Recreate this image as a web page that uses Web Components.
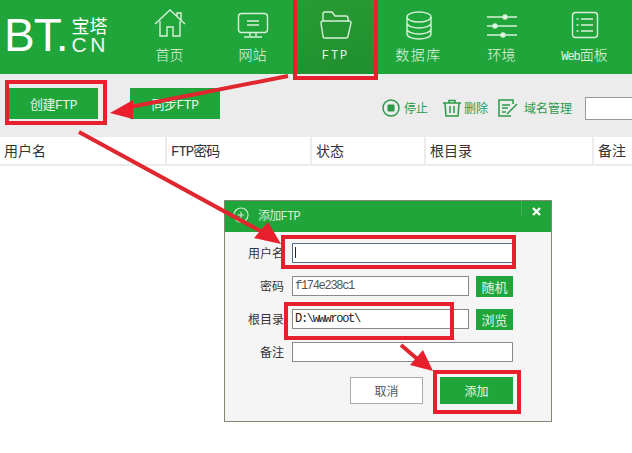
<!DOCTYPE html>
<html lang="zh">
<head>
<meta charset="utf-8">
<title>FTP</title>
<style>
    html, body {
        margin: 0;
        height: 100%;
        background: #fff;
        overflow: hidden;
    }

    body {
        position: relative;
        font-family: "Liberation Mono", "Noto Sans CJK SC", monospace;
        color: #333;
    }
</style>
</head>
<body>
<bt-header>
    <nav-item label="首页"><svg viewBox="0 0 32 30"><path d="M1 14 16 0l15 14M6 11v15h7v-9h6v9h7V11M23 6V3h4v7"/></svg></nav-item>
    <nav-item label="网站"><svg viewBox="0 0 32 30"><rect x="1.500" y="3.500" width="29" height="19" rx="3"/><path d="M10 11h12M10 15h12M13 23v3M19 23v3M7 27h18"/></svg></nav-item>
    <nav-item label="FTP" active spaced><svg viewBox="0 0 32 30"><path d="M3 11V4q0-2 2-2h7l3 4h11q2 0 2 2v3M1 13q0-2 2-2h26q2 0 2 2l-3 13q0 2-2 2H5q-2 0-2-2z"/></svg></nav-item>
    <nav-item label="数据库" wide><svg viewBox="0 0 32 30"><ellipse cx="16" cy="7" rx="12" ry="5"/><path d="M4 7v17c0 3 6 5 12 5s12-2 12-5V7M4 13c0 3 6 5 12 5s12-2 12-5M4 19c0 3 6 5 12 5s12-2 12-5"/></svg></nav-item>
    <nav-item label="环境"><svg viewBox="0 0 32 30"><path d="M1 7h30M1 16h30M1 25h30"/><circle class="dot" cx="19" cy="7" r="2" fill="#e8f6ea"/><circle class="dot" cx="9" cy="16" r="2" fill="#e8f6ea"/><circle class="dot" cx="17" cy="25" r="2" fill="#e8f6ea"/></svg></nav-item>
    <nav-item latin="Web" label="面板"><svg viewBox="0 0 32 30"><rect x="3.500" y="2.500" width="25" height="25" rx="3"/><path d="M12 9h12M12 15h12M12 21h12M7.500 9h2M7.500 15h2M7.500 21h2"/></svg></nav-item>
</bt-header>
<bt-toolbar></bt-toolbar>
<bt-table></bt-table>
<add-dialog></add-dialog>
<mark-up></mark-up>

<script>
class BtHeader extends HTMLElement {
    constructor() {
        super();
        this.shadowDOM = this.attachShadow({ mode: 'open' });
    }

    connectedCallback() {
        this.shadowDOM.innerHTML = `
            <style>
                :host {
                    display: flex;
                    height: 74px;
                    background: #20a53a;
                    color: #fff;
                }

                .logo {
                    width: 127px;
                    display: flex;
                    padding-left: 4px;
                    box-sizing: border-box;
                    flex: none;
                }

                .big {
                    font: 46px/46px "Liberation Sans", sans-serif;
                    letter-spacing: -1px;
                    margin-top: 12px;
                    height: 46px;
                }

                .side {
                    display: flex;
                    flex-direction: column;
                    padding: 15px 0 0 4px;
                    font: 18px/20px "Noto Sans CJK SC", sans-serif;
                }

                .cn {
                    font: 21px/20px "Liberation Sans", sans-serif;
                    letter-spacing: 3.500px;
                    color: #eef8ef;
                }

                .nav {
                    display: flex;
                    padding-left: 1px;
                }
            </style>
            <div class="logo">
                <span class="big">BT.</span>
                <div class="side"><span>宝塔</span><span class="cn">CN</span></div>
            </div>
            <div class="nav"><slot></slot></div>
        `;
    }
}

class NavItem extends HTMLElement {
    constructor() {
        super();
        this.shadowDOM = this.attachShadow({ mode: 'open' });
    }

    connectedCallback() {
        const latin = this.getAttribute('latin');
        this.shadowDOM.innerHTML = `
            <style>
                :host {
                    display: flex;
                    flex-direction: column;
                    align-items: center;
                    width: 83px;
                    height: 74px;
                    padding-top: 10px;
                    box-sizing: border-box;
                    gap: 6px;
                }

                :host([active]) {
                    background: linear-gradient(160deg, #2a9b33, #1f8f2f);
                }

                ::slotted(svg) {
                    width: 32px;
                    height: 30px;
                    fill: none;
                    stroke: #d7f0da;
                    stroke-width: 1.400;
                    overflow: visible;
                }

                span {
                    font-size: 14px;
                    font-weight: 300;
                    line-height: 20px;
                    color: #e4f5e7;
                }

                :host([spaced]) span {
                    font-size: 12px;
                    letter-spacing: 2px;
                }

                :host([wide]) span {
                    letter-spacing: 1.500px;
                }

                small {
                    font-size: 12px;
                    letter-spacing: -1px;
                }
            </style>
            <slot></slot>
            <span>${latin ? `<small>${latin}</small>` : ''}${this.getAttribute('label')}</span>
        `;
    }
}

class BtToolbar extends HTMLElement {
    constructor() {
        super();
        this.shadowDOM = this.attachShadow({ mode: 'open' });
    }

    connectedCallback() {
        this.shadowDOM.innerHTML = `
            <style>
                :host {
                    display: flex;
                    align-items: center;
                    height: 62px;
                    background: #ececec;
                    padding: 0 0 3px 9px;
                    box-sizing: border-box;
                    font-size: 13px;
                    overflow: hidden;
                }

                .btn {
                    width: 89px;
                    height: 31px;
                    background: #20a53a;
                    color: #e8f6ea;
                    display: flex;
                    align-items: center;
                    justify-content: center;
                    letter-spacing: -0.5px;
                    flex: none;
                }

                .btn + .btn {
                    margin-left: 32px;
                    width: 90px;
                }

                .tools {
                    margin: 9px -15px 0 auto;
                    display: flex;
                    align-items: center;
                    color: #2b9a48;
                    font-size: 12px;
                }

                .tool {
                    display: flex;
                    align-items: center;
                    gap: 4px;
                }

                svg {
                    width: 18px;
                    height: 18px;
                    fill: none;
                    stroke: #2b9a48;
                    stroke-width: 1.500;
                }

                input {
                    width: 60px;
                    height: 21px;
                    padding: 0;
                    margin-left: 13px;
                    border: 1px solid #999;
                    background: #fff;
                    box-sizing: content-box;
                }
            </style>
            <div class="btn">创建FTP</div>
            <div class="btn">同步FTP</div>
            <div class="tools">
                <div class="tool" style="margin-right:15px">
                    <svg viewBox="0 0 18 18"><circle cx="9" cy="9" r="8"/><rect x="5.500" y="5.500" width="7" height="7" rx="1" fill="#2b9a48" stroke="none"/></svg>停止
                </div>
                <div class="tool" style="margin-right:10px;gap:3px">
                    <svg viewBox="0 0 18 18"><path d="M0 4h18M6 4V1.500h6V4M2 4l1 13h12l1-13M7 7v7M11 7v7"/></svg>删除
                </div>
                <div class="tool" style="gap:6px">
                    <svg style="width:20px" viewBox="0 0 20 18"><path d="M15 5V1H1v16h12M4 6h8M4 9h6M4 13h4M9 15 19 5"/></svg>域名管理
                </div>
                <input>
            </div>
        `;
    }
}

class BtTable extends HTMLElement {
    constructor() {
        super();
        this.shadowDOM = this.attachShadow({ mode: 'open' });
    }

    connectedCallback() {
        this.shadowDOM.innerHTML = `
            <style>
                :host {
                    display: grid;
                    grid-template-columns: 165px 143px 112px 166px 1fr;
                    column-gap: 2px;
                    height: 27px;
                    background: #ececec;
                    padding: 1px 0 2px;
                    box-sizing: content-box;
                }

                div {
                    background: #fff;
                    font-size: 14px;
                    line-height: 30px;
                    height: 27px;
                    padding-left: 4px;
                    color: #333;
                }
            </style>
            <div>用户名</div>
            <div style="letter-spacing:-1px">FTP密码</div>
            <div>状态</div>
            <div>根目录</div>
            <div>备注</div>
        `;
    }
}

class AddDialog extends HTMLElement {
    constructor() {
        super();
        this.shadowDOM = this.attachShadow({ mode: 'open' });
    }

    connectedCallback() {
        this.shadowDOM.innerHTML = `
            <style>
                :host {
                    position: absolute;
                    left: 224px;
                    top: 200px;
                    width: 328px;
                    height: 222px;
                    box-sizing: border-box;
                    background: #f5f5f5;
                    border: 1px solid #7f8a70;
                    display: flex;
                    flex-direction: column;
                    font-size: 12px;
                }

                .title {
                    height: 31px;
                    background: #20a53a;
                    color: #d5efda;
                    display: flex;
                    align-items: flex-start;
                    padding-left: 8px;
                    gap: 9px;
                    flex: none;
                    box-sizing: border-box;
                }

                .title svg {
                    width: 16px;
                    height: 16px;
                    margin-top: 6px;
                    fill: none;
                    stroke: #cfeed5;
                    stroke-width: 1.200;
                }

                .title span {
                    letter-spacing: -0.7px;
                    line-height: 33px;
                }

                .close {
                    margin-left: auto;
                    width: 30px;
                    height: 15px;
                    border-left: 1px solid #3fb455;
                    box-sizing: border-box;
                    display: flex;
                    justify-content: center;
                }

                .close svg {
                    width: 9px;
                    height: 9px;
                    margin-top: 6px;
                    stroke: #fff;
                    stroke-width: 2.400;
                }

                .body {
                    display: flex;
                    flex-direction: column;
                    gap: 13px;
                    padding: 11px 38px 0 0;
                }

                .row {
                    display: flex;
                    align-items: center;
                    height: 20px;
                }

                label {
                    width: 59px;
                    text-align: right;
                    font-size: 12px;
                    color: #333;
                    margin-right: 8px;
                    flex: none;
                }

                input {
                    flex: 1;
                    min-width: 0;
                    height: 20px;
                    box-sizing: border-box;
                    border: 1px solid #8a8a8a;
                    background: #fff;
                    font: 12px "Liberation Mono", monospace;
                    padding: 0 2px;
                    letter-spacing: -1.300px;
                    outline: none;
                }

                input.focus {
                    border-color: #4f6f8f;
                }

                .pick {
                    width: 37px;
                    height: 21px;
                    margin-left: 7px;
                    background: #20a53a;
                    color: #e2f4e5;
                    font-size: 13px;
                    display: flex;
                    align-items: center;
                    justify-content: center;
                    flex: none;
                }

                .foot {
                    display: flex;
                    justify-content: flex-end;
                    gap: 17px;
                    padding: 15px 38px 0 0;
                }

                .foot div {
                    width: 73px;
                    height: 27px;
                    box-sizing: border-box;
                    display: flex;
                    align-items: center;
                    justify-content: center;
                    padding-top: 1px;
                }

                .cancel {
                    background: #fff;
                    border: 1px solid #aaa;
                    color: #555;
                }

                .ok {
                    background: #20a53a;
                    color: #e8f6ea;
                }

                .caret {
                    position: absolute;
                    left: 70px;
                    top: 46px;
                    width: 1px;
                    height: 11px;
                    background: #222;
                }
            </style>
            <div class="title">
                <svg viewBox="0 0 17 17"><circle cx="8.500" cy="8.500" r="7.500"/><path d="M8.500 5v7M5 8.500h7"/></svg>
                <span>添加FTP</span>
                <div class="close"><svg viewBox="0 0 9 9"><path d="M1 1l7 7M8 1L1 8"/></svg></div>
            </div>
            <div class="body">
                <div class="row"><label>用户名</label><input class="focus"></div>
                <div class="row"><label>密码</label><input value="f174e238c1" style="color:#555"><div class="pick">随机</div></div>
                <div class="row"><label>根目录</label><input value="D:\\wwwroot\\" style="color:#222"><div class="pick">浏览</div></div>
                <div class="row"><label>备注</label><input></div>
            </div>
            <div class="foot">
                <div class="cancel">取消</div>
                <div class="ok">添加</div>
            </div>
            <i class="caret"></i>
        `;
    }
}

// red annotations drawn over the screenshot
class MarkUp extends HTMLElement {
    constructor() {
        super();
        this.shadowDOM = this.attachShadow({ mode: 'open' });
    }

    connectedCallback() {
        this.shadowDOM.innerHTML = `
            <style>
                :host {
                    position: absolute;
                    inset: 0;
                    pointer-events: none;
                }

                svg {
                    display: block;
                    width: 632px;
                    height: 453px;
                }

                rect {
                    fill: none;
                    stroke: #e8202e;
                    stroke-width: 4;
                }

                line {
                    stroke: #e0262e;
                    stroke-width: 4;
                }

                polygon {
                    fill: #e8202e;
                }
            </style>
            <svg viewBox="0 0 632 453">
                <rect x="295" y="-4" width="81" height="82"/>
                <rect x="7" y="82" width="98" height="41"/>
                <rect x="283" y="237" width="231" height="30"/>
                <rect x="286" y="304" width="166" height="34"/>
                <rect x="435" y="372" width="84" height="40"/>
                <line x1="288" y1="76" x2="125" y2="108"/>
                <polygon points="110,113 133,100 133,119"/>
                <line x1="79" y1="132" x2="264" y2="233"/>
                <polygon points="281,244 254,238 268,222"/>
                <line x1="401" y1="345" x2="422" y2="363"/>
                <polygon points="433,371 410,365 423,350"/>
            </svg>
        `;
    }
}

customElements.define('bt-header', BtHeader);
customElements.define('nav-item', NavItem);
customElements.define('bt-toolbar', BtToolbar);
customElements.define('bt-table', BtTable);
customElements.define('add-dialog', AddDialog);
customElements.define('mark-up', MarkUp);
</script>
</body>
</html>
